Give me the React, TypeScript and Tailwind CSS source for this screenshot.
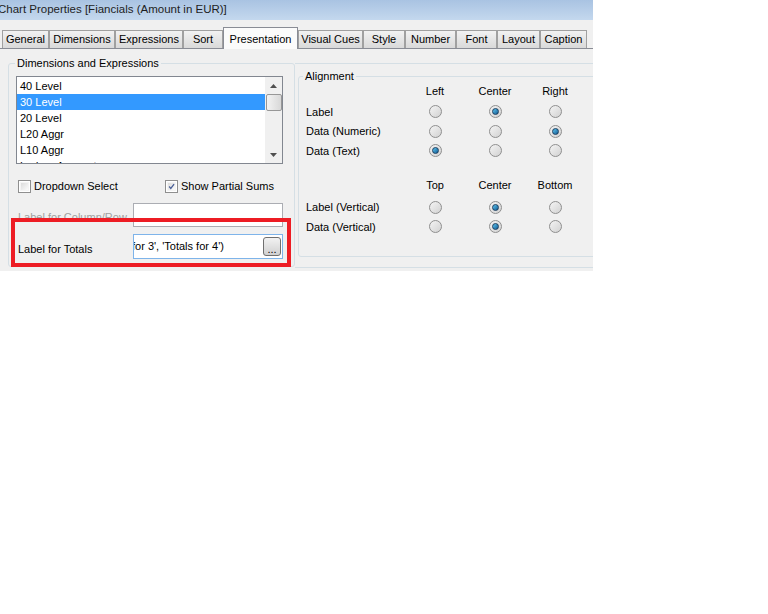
const font = { fontFamily: '"Liberation Sans", Arial, sans-serif' }

const tabs = [
  { label: "General", w: 47 },
  { label: "Dimensions", w: 66 },
  { label: "Expressions", w: 68 },
  { label: "Sort", w: 40 },
  { label: "Presentation", w: 75, active: true },
  { label: "Visual Cues", w: 65 },
  { label: "Style", w: 42 },
  { label: "Number", w: 51 },
  { label: "Font", w: 41 },
  { label: "Layout", w: 43 },
  { label: "Caption", w: 47 },
]

function Radio({ on }: { on?: boolean }) {
  return (
    <div className="size-[13px] rounded-full border border-[#8f8f8f] bg-gradient-to-br from-[#f4f4f4] to-[#d2d2d2] flex items-center justify-center">
      {on && (
        <div className="size-[7px] rounded-full border border-[#1b3f60] bg-gradient-to-br from-[#5fc6f0] to-[#0f5b93]" />
      )}
    </div>
  )
}

function Check({ on }: { on?: boolean }) {
  return (
    <div className="size-[13px] border border-[#8f8f8f] bg-white p-[1px] shrink-0">
      <div className="size-full bg-gradient-to-br from-[#dcdcdc] to-[#fbfbfb] border border-[#f4f4f4]">
        {on && (
          <svg viewBox="0 0 9 9" className="size-full">
            <path d="M1.5 4.5 L3.6 7 L7.8 1.3" stroke="#4a5f97" strokeWidth="1.6" fill="none" />
          </svg>
        )}
      </div>
    </div>
  )
}

function RadioRow({ label, sel, className = "" }: { label: string; sel: number; className?: string }) {
  return (
    <div className={"grid grid-cols-[99px_60px_60px_60px] h-[19.5px] items-center " + className}>
      <span className="whitespace-nowrap">{label}</span>
      {[0, 1, 2].map((i) => (
        <div key={i} className="flex justify-center">
          <Radio on={i === sel} />
        </div>
      ))}
    </div>
  )
}

function HeadRow({ cols, className = "" }: { cols: string[]; className?: string }) {
  return (
    <div className={"grid grid-cols-[99px_60px_60px_60px] h-[20px] items-center " + className}>
      <span />
      {cols.map((c) => (
        <span key={c} className="text-center">{c}</span>
      ))}
    </div>
  )
}

export default function App() {
  const items = ["40 Level", "30 Level", "20 Level", "L20 Aggr", "L10 Aggr", "Ledger Account"]
  return (
    <div className="w-[768px] h-[614px] bg-white relative overflow-hidden text-[11px] text-black" style={font}>
      <div className="w-[593px] overflow-hidden">
        <div className="h-[20px] bg-gradient-to-b from-[#a9c3e2] to-[#c4d8ee] flex items-center overflow-hidden">
          <span className="ml-[-2px] text-[11.5px] text-[#1e1e1e] whitespace-nowrap">
            Chart Properties [Fiancials (Amount in EUR)]
          </span>
        </div>
        <div className="bg-[#f0f0f0] h-[251px]">
          <div className="h-[29px] flex items-end pl-[2px] border-b border-[#898c95]">
            {tabs.map((t) => (
              <div
                key={t.label}
                style={{ width: t.w }}
                className={
                  t.active
                    ? "h-[22px] mb-[-1px] bg-[#fbfbfb] border border-b-0 border-[#898c95] flex justify-center pt-[3px] whitespace-nowrap"
                    : "h-[18px] bg-gradient-to-b from-[#f2f2f2] to-[#d9d9d9] border border-b-0 border-[#a0a0a0] flex items-center justify-center whitespace-nowrap"
                }
              >
                {t.label}
              </div>
            ))}
            <div className="flex-1" />
          </div>

          <div className="flex mt-[8px]">
            <fieldset className="ml-[8px] w-[287px] h-[210px] border border-[#d5dfe5] rounded-[3px] px-[7px] pt-[1px] shrink-0">
              <legend className="ml-[-1px] px-[2px] leading-[13px]">Dimensions and Expressions</legend>
              <div className="w-[267px] h-[88px] border border-[#828790] bg-white flex mt-[5px]">
                <div className="flex-1 pt-[1px] overflow-hidden">
                  {items.map((it, i) => (
                    <div
                      key={it}
                      className={
                        "h-[16px] leading-[16px] pl-[3px] whitespace-nowrap " +
                        (i === 1 ? "bg-[#3399ff] text-white" : "")
                      }
                    >
                      {it}
                    </div>
                  ))}
                </div>
                <div className="w-[17px] bg-[#f0f0f0] flex flex-col items-center">
                  <div className="h-[17px] flex items-center justify-center">
                    <svg width="7" height="4" viewBox="0 0 7 4"><path d="M0 4 L3.5 0 L7 4 Z" fill="#505050" /></svg>
                  </div>
                  <div className="w-[16px] h-[17px] rounded-[2px] border border-[#979797] bg-gradient-to-r from-[#f3f3f3] to-[#d8d8d8]" />
                  <div className="flex-1" />
                  <div className="h-[17px] flex items-center justify-center">
                    <svg width="7" height="4" viewBox="0 0 7 4"><path d="M0 0 L3.5 4 L7 0 Z" fill="#505050" /></svg>
                  </div>
                </div>
              </div>

              <div className="flex items-center mt-[15px] h-[14px]">
                <div className="w-[149px] flex items-center gap-[3px] pl-[2px]">
                  <Check />
                  <span className="whitespace-nowrap">Dropdown Select</span>
                </div>
                <div className="flex items-center gap-[3px]">
                  <Check on />
                  <span className="whitespace-nowrap">Show Partial Sums</span>
                </div>
              </div>

              <div className="flex items-center mt-[10px] h-[24px]">
                <span className="w-[117px] pl-[2px] text-[#a0a0a0] whitespace-nowrap overflow-hidden pt-[4px]">Label for Column/Row</span>
                <div className="w-[150px] h-[24px] border border-[#abadb3] bg-white" />
              </div>

              <div className="flex items-center mt-[7px] h-[25px]">
                <span className="w-[117px] pl-[2px] pt-[5px] whitespace-nowrap">Label for Totals</span>
                <div className="w-[150px] h-[25px] border border-[#7eb4ea] bg-white flex items-center overflow-hidden">
                  <span className="flex-1 whitespace-nowrap ml-[-2px] overflow-hidden">for 3', 'Totals for 4')</span>
                  <div className="w-[18px] h-[19px] mr-[1px] shrink-0 rounded-[3px] border border-[#707070] bg-gradient-to-b from-[#f2f2f2] to-[#d0d0d0] flex items-end justify-center leading-[12px]">
                    ...
                  </div>
                </div>
              </div>
            </fieldset>

            <div className="flex-1 h-[205px] mt-[6px] border-t border-b border-[#d5dfe5] pl-[3px] pt-[5.5px]">
              <fieldset className="w-[310px] h-[187px] border border-[#d5dfe5] rounded-[3px] pl-[7px] shrink-0">
                <legend className="ml-[-3px] px-[2px] leading-[13px]">Alignment</legend>
                <HeadRow cols={["Left", "Center", "Right"]} className="mt-[-1.5px]" />
                <RadioRow label="Label" sel={1} className="mt-[1px]" />
                <RadioRow label="Data (Numeric)" sel={2} />
                <RadioRow label="Data (Text)" sel={0} />
                <HeadRow cols={["Top", "Center", "Bottom"]} className="mt-[15px]" />
                <RadioRow label="Label (Vertical)" sel={1} className="mt-[2px]" />
                <RadioRow label="Data (Vertical)" sel={1} />
              </fieldset>
            </div>
          </div>
        </div>
      </div>
      <div className="absolute left-[11px] top-[218px] w-[280px] h-[49px] border-[4px] border-[#ed1c24]" />
    </div>
  )
}
